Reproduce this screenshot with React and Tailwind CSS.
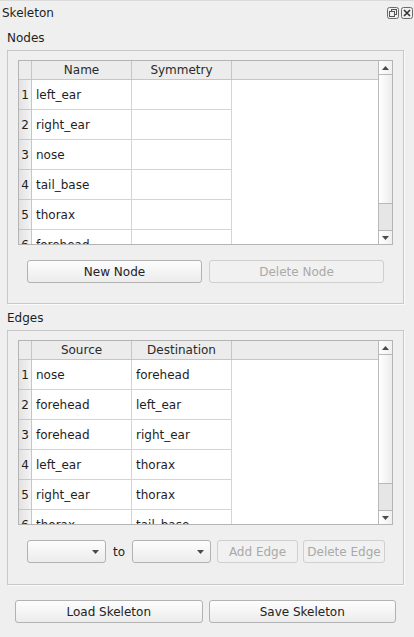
import React from 'react';

const nodeRows = [
  ['left_ear', ''],
  ['right_ear', ''],
  ['nose', ''],
  ['tail_base', ''],
  ['thorax', ''],
  ['forehead', ''],
];

const edgeRows = [
  ['nose', 'forehead'],
  ['forehead', 'left_ear'],
  ['forehead', 'right_ear'],
  ['left_ear', 'thorax'],
  ['right_ear', 'thorax'],
  ['thorax', 'tail_base'],
];

const Arrow = ({ up }) => (
  <svg width="7" height="4" viewBox="0 0 7 4">
    <path d={up ? 'M0 4 L3.5 0 L7 4 Z' : 'M0 0 L3.5 4 L7 0 Z'} fill="#4a4a4a" />
  </svg>
);

const Scrollbar = () => (
  <div className="flex w-[14px] flex-col border-l border-[#b8b8b8] bg-[#e6e6e6]">
    <div className="flex h-[14px] items-center justify-center border-b border-[#b8b8b8] bg-gradient-to-r from-white to-[#f0f0f0]">
      <Arrow up />
    </div>
    <div className="h-[129px] border-b border-[#b8b8b8] bg-gradient-to-r from-white to-[#ececec]" />
    <div className="flex-1" />
    <div className="flex h-[14px] items-center justify-center border-t border-[#b8b8b8] bg-gradient-to-r from-white to-[#f0f0f0]">
      <Arrow />
    </div>
  </div>
);

const Table = ({ headers, rows }) => (
  <div className="flex h-[185px] w-[375px] border border-[#b4b4b4] bg-white">
    <div className="flex-1 overflow-hidden">
      <div className="flex h-[19px] border-b border-[#c6c6c6] bg-[#ececec] text-[#2a2a2a]">
        <div className="w-[13px] border-r border-[#c6c6c6]" />
        {headers.map((header) => (
          <div key={header} className="w-[100px] border-r border-[#c6c6c6] text-center leading-[19px]">{header}</div>
        ))}
      </div>
      {rows.map((row, index) => (
        <div key={index} className="flex h-[30px]">
          <div className="w-[13px] border-r border-b border-[#c6c6c6] bg-gradient-to-r from-[#e2e2e2] to-[#f4f4f4] text-center leading-[30px]">{index + 1}</div>
          {row.map((cell, cellIndex) => (
            <div key={cellIndex} className="w-[100px] overflow-hidden whitespace-nowrap border-r border-b border-[#d4d4d4] px-[4px] leading-[30px]">{cell}</div>
          ))}
        </div>
      ))}
    </div>
    <Scrollbar />
  </div>
);

const Button = ({ children, disabled, className = '' }) => (
  <button
    className={`h-[23px] whitespace-nowrap rounded-[3px] border text-center leading-[22px] ${
      disabled
        ? 'border-[#cfcfcf] bg-[#f1f1f1] text-[#a9a9a9]'
        : 'border-[#b2b2b2] bg-gradient-to-b from-[#fdfdfd] to-[#ececec] text-[#222]'
    } ${className}`}
  >
    {children}
  </button>
);

const Combo = () => (
  <div className="flex h-[23px] w-[79px] items-center justify-end rounded-[3px] border border-[#b2b2b2] bg-gradient-to-b from-[#fdfdfd] to-[#ececec] pr-[6px]">
    <Arrow />
  </div>
);

const DockIcons = () => (
  <div className="flex gap-[2px]">
    <svg width="12" height="12" viewBox="0 0 12 12">
      <rect x="0.5" y="0.5" width="11" height="11" rx="2" fill="none" stroke="#6a6a6a" />
      <rect x="4.5" y="2.5" width="5" height="5" fill="none" stroke="#555" />
      <rect x="2.5" y="4.5" width="5" height="5" fill="#f0f0f0" stroke="#555" />
    </svg>
    <svg width="12" height="12" viewBox="0 0 12 12">
      <rect x="0.5" y="0.5" width="11" height="11" rx="2" fill="none" stroke="#6a6a6a" />
      <path d="M3 3 L9 9 M9 3 L3 9" stroke="#333" strokeWidth="1.6" />
    </svg>
  </div>
);

export default function App() {
  return (
    <div
      className="h-[637px] w-[414px] overflow-hidden border-t border-[#dadada] bg-[#efefef] text-[12px] text-[#1e1e1e]"
      style={{ fontFamily: '"DejaVu Sans", sans-serif' }}
    >
      <div className="flex h-[23px] items-center justify-between pl-[2px] pr-[1px] pt-[1px]">
        <span>Skeleton</span>
        <DockIcons />
      </div>

      <div className="pl-[7px] pr-[10px]">
        <div className="h-[26px] pt-[7px] leading-[14px]">Nodes</div>
        <div className="h-[254px] border border-[#c8c8c8] shadow-[1px_1px_0_#fafafa]">
          <div className="pl-[10px] pt-[9px]">
            <Table headers={['Name', 'Symmetry']} rows={nodeRows} />
          </div>
          <div className="mx-[19px] mt-[15px] grid grid-cols-2 gap-[7px]">
            <Button>New Node</Button>
            <Button disabled>Delete Node</Button>
          </div>
        </div>

        <div className="h-[26px] pt-[7px] leading-[14px]">Edges</div>
        <div className="h-[255px] border border-[#c8c8c8] shadow-[1px_1px_0_#fafafa]">
          <div className="pl-[10px] pt-[9px]">
            <Table headers={['Source', 'Destination']} rows={edgeRows} />
          </div>
          <div className="ml-[19px] mt-[15px] flex items-center">
            <Combo />
            <span className="w-[26px] text-center">to</span>
            <Combo />
            <Button disabled className="ml-[6px] w-[81px]">Add Edge</Button>
            <Button disabled className="ml-[5px] w-[82px]">Delete Edge</Button>
          </div>
        </div>
      </div>

      <div className="mt-[15px] grid grid-cols-2 gap-[6px] pl-[15px] pr-[18px]">
        <Button>Load Skeleton</Button>
        <Button>Save Skeleton</Button>
      </div>
    </div>
  );
}
